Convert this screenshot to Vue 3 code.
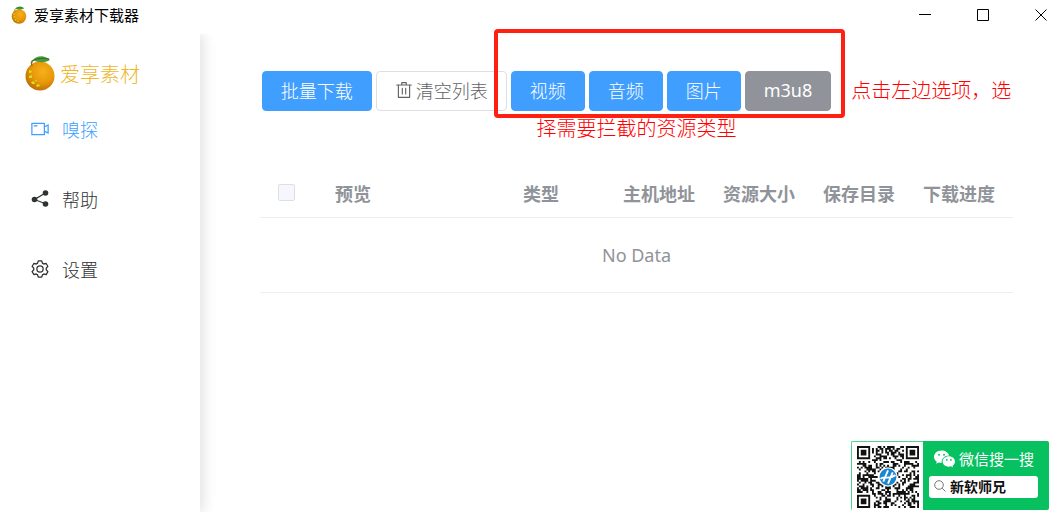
<script setup>
import { ref } from "vue";

const menu = [
  { key: "sniff", label: "嗅探" },
  { key: "help", label: "帮助" },
  { key: "setting", label: "设置" },
];
const active = ref("sniff");

const filters = ref([
  { label: "视频", on: true },
  { label: "音频", on: true },
  { label: "图片", on: true },
  { label: "m3u8", on: false },
]);

const columns = ["预览", "类型", "主机地址", "资源大小", "保存目录", "下载进度"];
const keyword = ref("新软师兄");

// QR modules, drawn as one path of unit squares
const size = 33;

function finder(x, y) {
  const corners = [
    [0, 0],
    [size - 7, 0],
    [0, size - 7],
  ];
  for (const [cx, cy] of corners) {
    const dx = Math.abs(x - cx - 3);
    const dy = Math.abs(y - cy - 3);
    const d = Math.max(dx, dy);
    if (d <= 4) return d === 3 || d <= 1 ? 1 : 0;
  }
  return -1;
}

function buildQr() {
  let seed = 20231;
  let path = "";
  for (let y = 0; y < size; y++) {
    for (let x = 0; x < size; x++) {
      seed = (seed * 1103515245 + 12345) % 2147483648;
      const f = finder(x, y);
      const dark = f === -1 ? (seed >> 12) % 100 < 52 : f === 1;
      if (dark) path += `M${x} ${y}h1v1h-1z`;
    }
  }
  return path;
}
const qrPath = buildQr();
</script>

<template>
  <div class="window">
    <svg width="0" height="0" class="defs" aria-hidden="true">
      <defs>
        <radialGradient id="peel" cx="0.6" cy="0.35" r="0.7">
          <stop offset="0" stop-color="#f7b01c" />
          <stop offset="0.55" stop-color="#e89808" />
          <stop offset="1" stop-color="#b96a04" />
        </radialGradient>
        <symbol id="fruit" viewBox="0 0 30 36">
          <circle cx="15" cy="21" r="14.5" fill="url(#peel)" />
          <path d="M8 5C11 1 19-1 25 5 20 8 13 8 8 5z" fill="#4c9a3a" />
          <path d="M9 5c4-2 9-2 15-1" stroke="#2f6d2a" fill="none" />
          <path d="M9 5c-3 1-3 3-2 6" stroke="#6b7a2a" stroke-width="1.4" fill="none" />
          <path
            d="M4 15l3 1-1 2-2 0zM4 21l3-1 0 3-3 0zM6 27l3-1 1 3-3 0zM11 30l3-1 1 2-3 1zM10 25l2 0-1 2z"
            fill="#d8dc1c"
          />
        </symbol>
      </defs>
    </svg>

    <header class="titlebar">
      <svg class="app-icon"><use href="#fruit" /></svg>
      <span class="app-title">爱享素材下载器</span>
      <div class="controls">
        <button type="button" aria-label="最小化">
          <svg viewBox="0 0 12 12"><path d="M0 5.5h12" /></svg>
        </button>
        <button type="button" aria-label="最大化">
          <svg viewBox="0 0 12 12"><path d="M.5.5h11v11H.5z" /></svg>
        </button>
        <button type="button" aria-label="关闭">
          <svg viewBox="0 0 12 12"><path d="M.5.5l11 11M11.5.5l-11 11" /></svg>
        </button>
      </div>
    </header>

    <div class="body">
      <aside class="sidebar">
        <div class="brand">
          <svg class="brand-icon"><use href="#fruit" /></svg>
          <span>爱享素材</span>
        </div>
        <nav>
          <a
            v-for="item in menu"
            :key="item.key"
            :class="['menu-item', { active: active === item.key }]"
            href="#"
            @click.prevent="active = item.key"
          >
            <svg v-if="item.key === 'sniff'" viewBox="0 0 1024 1024">
              <path
                fill="currentColor"
                d="M704 768V256H128v512h576zm64-416 192-96v512l-192-96v128a32 32 0 0 1-32 32H96a32 32 0 0 1-32-32V224a32 32 0 0 1 32-32h640a32 32 0 0 1 32 32v128zm0 71.552v176.896l128 64V359.552l-128 64zM192 320h192v64H192v-64z"
              />
            </svg>
            <svg v-else-if="item.key === 'help'" viewBox="0 0 20 20">
              <path d="M15.5 4L4.500 10.500l11 4.300" fill="none" stroke="currentColor" stroke-width="1.2" />
              <circle cx="15.500" cy="4" r="2.800" fill="currentColor" />
              <circle cx="4.500" cy="10.500" r="2.800" fill="currentColor" />
              <circle cx="15.500" cy="15" r="2.800" fill="currentColor" />
            </svg>
            <svg v-else viewBox="0 0 1024 1024">
              <path
                fill="currentColor"
                d="M600.704 64a32 32 0 0 1 30.464 22.208l35.200 109.376c14.784 7.232 28.928 15.360 42.432 24.512l112.384-24.192a32 32 0 0 1 34.432 15.360L944.320 364.800a32 32 0 0 1-4.032 37.504l-77.120 85.120a357.120 357.120 0 0 1 0 49.024l77.120 85.248a32 32 0 0 1 4.032 37.504l-88.704 153.600a32 32 0 0 1-34.432 15.296L708.800 803.904c-13.440 9.088-27.648 17.280-42.368 24.512l-35.264 109.376A32 32 0 0 1 600.704 960H423.296a32 32 0 0 1-30.464-22.208L357.696 828.480a351.616 351.616 0 0 1-42.560-24.640l-112.320 24.256a32 32 0 0 1-34.432-15.360L79.680 659.200a32 32 0 0 1 4.032-37.504l77.120-85.248a357.120 357.120 0 0 1 0-48.896l-77.120-85.248A32 32 0 0 1 79.680 364.800l88.704-153.600a32 32 0 0 1 34.432-15.296l112.320 24.256c13.568-9.152 27.776-17.408 42.560-24.640l35.200-109.312A32 32 0 0 1 423.232 64H600.640zm-23.424 64H446.720l-36.352 113.088-24.512 11.968a294.113 294.113 0 0 0-34.816 20.096l-22.656 15.360-116.224-25.088-65.280 113.152 79.680 88.192-1.920 27.136a293.120 293.120 0 0 0 0 40.192l1.920 27.136-79.808 88.192 65.344 113.152 116.224-25.024 22.656 15.296a294.113 294.113 0 0 0 34.816 20.096l24.512 11.968L446.720 896h130.688l36.480-113.152 24.448-11.904a288.282 288.282 0 0 0 34.752-20.096l22.592-15.296 116.288 25.024 65.280-113.152-79.744-88.192 1.920-27.136a293.120 293.120 0 0 0 0-40.256l-1.920-27.136 79.808-88.128-65.344-113.152-116.288 24.960-22.592-15.232a287.616 287.616 0 0 0-34.752-20.096l-24.448-11.904L577.344 128zM512 320a192 192 0 1 1 0 384 192 192 0 0 1 0-384zm0 64a128 128 0 1 0 0 256 128 128 0 0 0 0-256z"
              />
            </svg>
            <span>{{ item.label }}</span>
          </a>
        </nav>
      </aside>

      <main class="content">
        <div class="toolbar">
          <div class="actions">
            <button type="button" class="btn primary">批量下载</button>
            <button type="button" class="btn">
              <svg viewBox="0 0 1024 1024">
                <path
                  fill="currentColor"
                  d="M160 256H96a32 32 0 0 1 0-64h256V95.936a32 32 0 0 1 32-32h256a32 32 0 0 1 32 32V192h256a32 32 0 1 1 0 64h-64v672a32 32 0 0 1-32 32H192a32 32 0 0 1-32-32V256zm448-64v-64H416v64h192zM224 896h576V256H224v640zm192-128a32 32 0 0 1-32-32V416a32 32 0 0 1 64 0v320a32 32 0 0 1-32 32zm192 0a32 32 0 0 1-32-32V416a32 32 0 0 1 64 0v320a32 32 0 0 1-32 32z"
                />
              </svg>
              清空列表
            </button>
            <div class="filters">
              <button
                v-for="filter in filters"
                :key="filter.label"
                type="button"
                :class="['btn', filter.on ? 'primary' : 'info']"
                @click="filter.on = !filter.on"
              >
                {{ filter.label }}
              </button>
            </div>
          </div>
          <span class="hint">点击左边选项，选择需要拦截的资源类型</span>
        </div>

        <table>
          <colgroup>
            <col class="col-check" />
            <col class="col-preview" />
            <col v-for="n in 4" :key="n" class="col-info" />
            <col />
          </colgroup>
          <thead>
            <tr>
              <th class="check"><input type="checkbox" aria-label="全选" /></th>
              <th v-for="name in columns" :key="name">{{ name }}</th>
            </tr>
          </thead>
          <tbody>
            <tr>
              <td :colspan="columns.length + 1">No Data</td>
            </tr>
          </tbody>
        </table>
      </main>
    </div>

    <div class="wechat">
      <div class="qr">
        <svg viewBox="0 0 33 33">
          <path :d="qrPath" fill="#111" />
          <circle cx="16.500" cy="16.500" r="5.200" fill="#fff" />
          <circle cx="16.500" cy="16.500" r="4.500" fill="#1b87d2" />
          <path
            d="M16.500 13l-2.500 6M19 14l-2.500 6M12.500 17.500c2-2 4 .8 8-2"
            stroke="#fff"
            stroke-width="1"
            fill="none"
          />
        </svg>
      </div>
      <div class="search">
        <label class="search-title" for="wechat-search">
          <svg viewBox="0 0 22 18">
            <path
              fill="#fff"
              d="M8 0C3.500 0 0 3 0 6.700c0 2.100 1.100 4 2.900 5.200L2.200 14l2.600-1.300c1 .3 2.100.5 3.200.5C7.500 8.500 11 5.400 15.900 5.300 15.100 2.200 11.900 0 8 0z"
            />
            <path
              fill="#fff"
              d="M22 11.600c0-3-2.900-5.400-6.500-5.400S9 8.600 9 11.600 11.900 17 15.500 17c.8 0 1.600-.1 2.300-.3l2.200 1.200-.6-1.900c1.600-1 2.600-2.600 2.600-4.400z"
            />
            <g fill="#07c160">
              <circle cx="5.300" cy="4.600" r="1" />
              <circle cx="10.500" cy="4.600" r="1" />
              <circle cx="13.400" cy="10" r=".9" />
              <circle cx="17.700" cy="10" r=".9" />
            </g>
          </svg>
          微信搜一搜
        </label>
        <div class="search-box">
          <svg viewBox="0 0 12 12" fill="none" stroke="#777">
            <circle cx="5" cy="5" r="4.300" />
            <path d="M8.200 8.200l3.300 3.300" />
          </svg>
          <input id="wechat-search" v-model="keyword" type="text" />
        </div>
      </div>
    </div>
  </div>
</template>

<style>
body {
  margin: 0;
  background: #fff;
}
</style>

<style scoped>
.window {
  position: relative;
  display: flex;
  flex-direction: column;
  min-height: 100vh;
  overflow: hidden;
  font-family: "Noto Sans", "Noto Sans CJK SC", sans-serif;
  font-size: 18px;
  font-weight: 300;
  color: #303133;
}
.window * {
  box-sizing: border-box;
}
button,
input {
  margin: 0;
  font-family: inherit;
  font-weight: inherit;
}
.defs {
  position: absolute;
}
.titlebar {
  display: flex;
  align-items: center;
  height: 34px;
  padding: 0 3px 4px 11px;
}
.app-icon {
  width: 16px;
  height: 18px;
}
.app-title {
  margin-left: 7px;
  font-size: 15px;
  font-weight: 400;
  line-height: 20px;
  color: #000;
}
.controls {
  display: flex;
  gap: 46px;
  margin-left: auto;
  button {
    display: flex;
    padding: 0;
    border: 0;
    background: none;
  }
  svg {
    width: 12px;
    height: 12px;
    fill: none;
    stroke: #000;
  }
}
.body {
  flex: 1;
  display: flex;
}
.sidebar {
  width: 200px;
  flex-shrink: 0;
  box-shadow: 2px 0 14px rgba(0, 0, 0, 0.14);
  clip-path: inset(0 -20px 0 0);
}
.brand {
  display: flex;
  align-items: center;
  gap: 5px;
  height: 60px;
  padding: 18px 0 0 25px;
  font-size: 20px;
  color: #eeb62b;
}
.brand-icon {
  width: 30px;
  height: 36px;
}
.menu-item {
  display: flex;
  align-items: center;
  gap: 12px;
  height: 70px;
  padding-left: 30px;
  color: #303133;
  text-decoration: none;
  svg {
    width: 20px;
    height: 20px;
  }
  &.active {
    color: #409eff;
  }
}
.content {
  flex: 1;
  padding: 37px 37px 0 60px;
}
.toolbar {
  text-align: center;
  line-height: 36px;
}
.actions {
  display: inline-flex;
  gap: 4px;
}
.filters {
  position: relative;
  display: flex;
  gap: 4px;
  &::after {
    content: "";
    position: absolute;
    inset: -42px -14px -7px -17px;
    border: 4px solid #ff2011;
    border-radius: 4px;
    pointer-events: none;
  }
}
.btn {
  display: flex;
  align-items: center;
  gap: 3px;
  height: 40px;
  padding: 0 18px 2px;
  border: 1px solid #dcdfe6;
  border-radius: 4px;
  background: #fff;
  color: #606266;
  font-size: 18px;
  white-space: nowrap;
  cursor: pointer;
  svg {
    width: 18px;
    height: 18px;
  }
  &.primary {
    border-color: #409eff;
    background: #409eff;
    color: #fff;
  }
  &.info {
    border-color: #909399;
    background: #909399;
    color: #fff;
    font-weight: 400;
  }
}
.hint {
  margin-left: 20px;
  font-size: 20px;
  color: #f00;
}
table {
  width: 100%;
  margin-top: 22px;
  border-collapse: collapse;
  table-layout: fixed;
  color: #909399;
}
.col-check {
  width: 63px;
}
.col-preview {
  width: 188px;
}
.col-info {
  width: 100px;
}
th,
td {
  padding: 0 12px;
  border-bottom: 1px solid #ebeef5;
  white-space: nowrap;
}
th {
  height: 48px;
  text-align: left;
  font-weight: 700;
}
th.check {
  padding: 0 18px;
}
td {
  height: 75px;
  text-align: center;
  font-weight: 400;
}
th input {
  display: block;
  appearance: none;
  width: 17px;
  height: 17px;
  border: 1px solid #dcdfe6;
  border-radius: 2px;
  background: #f5f7fc;
}
.wechat {
  position: absolute;
  right: 1px;
  bottom: 2px;
  display: flex;
  height: 69px;
  border-radius: 2px;
  overflow: hidden;
  background: #07c160;
  font-weight: 400;
}
.qr {
  width: 72px;
  padding: 4px 4px 2px 5px;
  border: solid #4fd68c;
  border-width: 1px 0 0 1px;
  background: #fff;
  svg {
    display: block;
    width: 62px;
    height: 62px;
  }
}
.search {
  display: flex;
  flex-direction: column;
  gap: 6px;
  width: 126px;
  padding: 7px 11px 0 6px;
}
.search-title {
  display: flex;
  align-items: center;
  gap: 4px;
  padding-left: 5px;
  font-size: 15px;
  line-height: 22px;
  color: #fff;
  white-space: nowrap;
  svg {
    width: 21px;
    height: 18px;
  }
}
.search-box {
  display: flex;
  align-items: center;
  gap: 4px;
  height: 22px;
  padding: 0 0 2px 5px;
  border-radius: 3px;
  background: #fff;
  svg {
    width: 12px;
    height: 12px;
  }
  input {
    flex: 1;
    min-width: 0;
    padding: 0;
    border: 0;
    background: none;
    font-size: 14px;
    font-weight: 700;
    color: #111;
  }
}
</style>
